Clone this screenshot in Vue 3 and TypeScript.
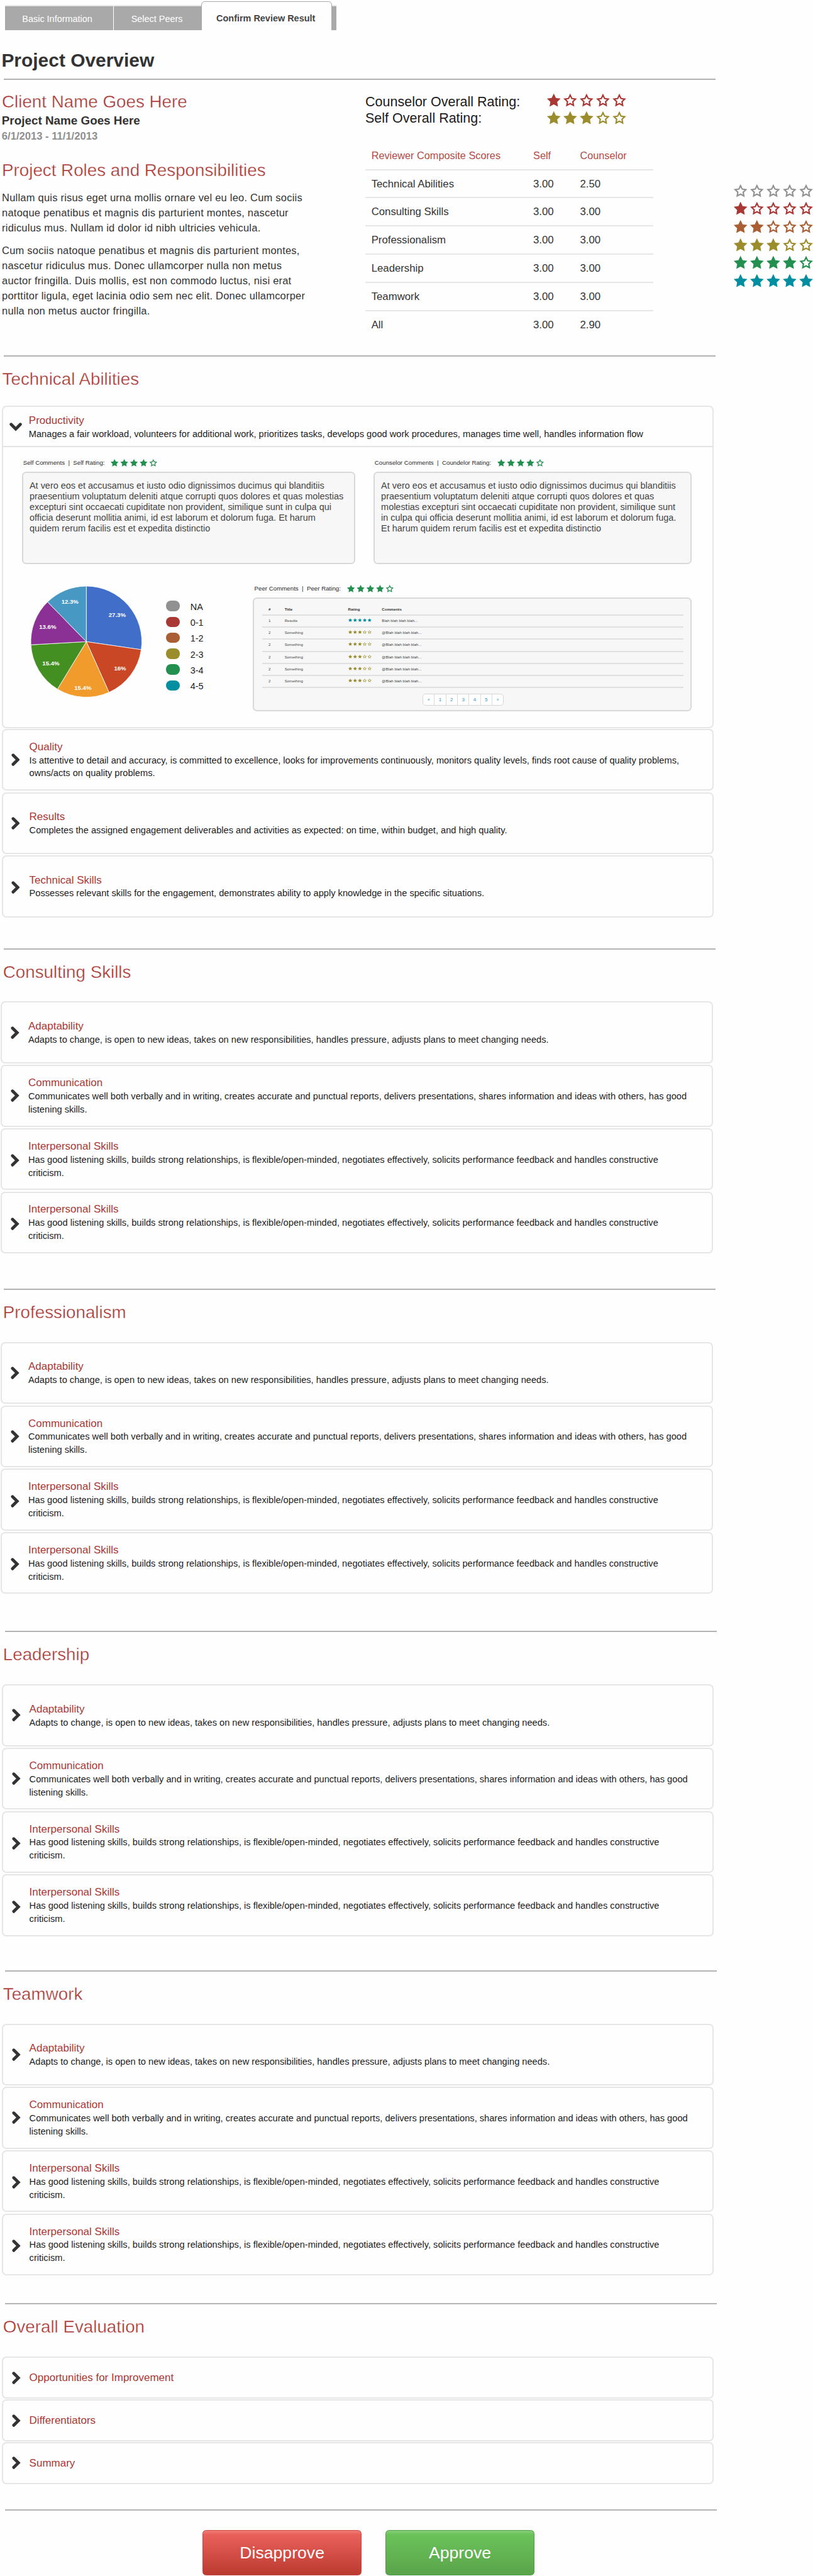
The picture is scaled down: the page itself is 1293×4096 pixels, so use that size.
<script setup lang="ts">
import { defineComponent, h } from 'vue'

/** Five-point star path centred at (cx, cy). */
function starPath(cx: number, cy: number, outer: number, inner: number): string {
  const pts: string[] = []
  for (let i = 0; i < 10; i++) {
    const r = i % 2 === 0 ? outer : inner
    const a = (Math.PI / 5) * i - Math.PI / 2
    pts.push(`${(cx + r * Math.cos(a)).toFixed(2)} ${(cy + r * Math.sin(a)).toFixed(2)}`)
  }
  return `M${pts.join('L')}Z`
}

const STAR_FULL = starPath(14, 14, 14.2, 7.1)
const STAR_EMPTY = STAR_FULL + starPath(14, 14, 8.1, 4.05)

const StarRating = defineComponent({
  props: {
    value: { type: Number, required: true },
    tone: { type: String, required: true },
    pitch: { type: Number, default: 32.5 },
    size: { type: Number, default: 26.7 },
  },
  setup(props) {
    return () => {
      const k = props.size / 26.7
      const width = props.pitch * 4 + props.size
      const height = 25.4 * k
      return h(
        'svg',
        {
          class: ['stars', props.tone],
          viewBox: `0 0 ${width} ${height}`,
          style: { width: `${width / 10}rem`, height: `${height / 10}rem` },
        },
        [0, 1, 2, 3, 4].map((i) =>
          h('path', {
            d: i < props.value ? STAR_FULL : STAR_EMPTY,
            'fill-rule': 'evenodd',
            fill: 'currentColor',
            transform: `translate(${i * props.pitch - 0.65 * k} 0) scale(${k})`,
          }),
        ),
      )
    }
  },
})

interface Item {
  title: string
  text?: string
  low?: boolean
}
interface Section {
  title: string
  height: number
  shift: boolean
  compact?: boolean
  items: Item[]
}

const scores = [
  ['Technical Abilities', '3.00', '2.50'],
  ['Consulting Skills', '3.00', '3.00'],
  ['Professionalism', '3.00', '3.00'],
  ['Leadership', '3.00', '3.00'],
  ['Teamwork', '3.00', '3.00'],
  ['All', '3.00', '2.90'],
]

const scale = [
  { value: 0, tone: 'gray' },
  { value: 1, tone: 'red' },
  { value: 2, tone: 'rust' },
  { value: 3, tone: 'olive' },
  { value: 4, tone: 'green' },
  { value: 5, tone: 'teal' },
]

const legend = [
  { label: 'NA', tone: 'gray' },
  { label: '0-1', tone: 'red' },
  { label: '1-2', tone: 'rust' },
  { label: '2-3', tone: 'olive' },
  { label: '3-4', tone: 'green' },
  { label: '4-5', tone: 'teal' },
]

const slices = [
  { pct: 27.3, label: '27.3%', color: '#416ec9', x: 171.2, y: 56.3 },
  { pct: 16, label: '16%', color: '#ca4725', x: 177, y: 162 },
  { pct: 15.4, label: '15.4%', color: '#f09b2b', x: 103.3, y: 200.6 },
  { pct: 15.4, label: '15.4%', color: '#448f22', x: 39.8, y: 152.6 },
  { pct: 13.6, label: '13.6%', color: '#8b3094', x: 33.5, y: 80.6 },
  { pct: 12.3, label: '12.3%', color: '#4798c3', x: 77.6, y: 30.3 },
]
let turn = 0
const wedges = slices.map((s) => {
  const a0 = turn * Math.PI * 2
  turn += s.pct / 100
  const a1 = turn * Math.PI * 2
  const p = (a: number) => `${(110 + 110 * Math.sin(a)).toFixed(2)} ${(110 - 110 * Math.cos(a)).toFixed(2)}`
  return { ...s, d: `M110 110L${p(a0)}A110 110 0 0 1 ${p(a1)}Z` }
})

const technical: Item[] = [
  {
    title: 'Quality',
    text: 'Is attentive to detail and accuracy, is committed to excellence, looks for improvements continuously, monitors quality levels, finds root cause of quality problems,\nowns/acts on quality problems.',
  },
  {
    title: 'Results',
    text: 'Completes the assigned engagement deliverables and activities as expected: on time, within budget, and high quality.',
  },
  {
    title: 'Technical Skills',
    text: 'Possesses relevant skills for the engagement, demonstrates ability to apply knowledge in the specific situations.',
    low: true,
  },
]

const interpersonal: Item = {
  title: 'Interpersonal Skills',
  text: 'Has good listening skills, builds strong relationships, is flexible/open-minded, negotiates effectively, solicits performance feedback and handles constructive\ncriticism.',
  low: true,
}
const common: Item[] = [
  {
    title: 'Adaptability',
    text: 'Adapts to change, is open to new ideas, takes on new responsibilities, handles pressure, adjusts plans to meet changing needs.',
  },
  {
    title: 'Communication',
    text: 'Communicates well both verbally and in writing, creates accurate and punctual reports, delivers presentations, shares information and ideas with others, has good\nlistening skills.',
  },
  interpersonal,
  interpersonal,
]

const sections: Section[] = [
  { title: 'Consulting Skills', height: 674.7, shift: false, items: common },
  { title: 'Professionalism', height: 678.3, shift: false, items: common },
  { title: 'Leadership', height: 672, shift: true, items: common },
  { title: 'Teamwork', height: 660, shift: true, items: common },
  {
    title: 'Overall Evaluation',
    height: 408,
    shift: true,
    compact: true,
    items: [{ title: 'Opportunities for Improvement' }, { title: 'Differentiators' }, { title: 'Summary' }],
  },
]

const peers = [
  { n: '1', title: 'Results', value: 5, tone: 'teal', comment: 'Blah blah blah blah...' },
  ...Array.from({ length: 5 }, () => ({
    n: '2',
    title: 'Something',
    value: 3,
    tone: 'olive',
    comment: '@Blah blah blah blah...',
  })),
]
const pages = ['«', '1', '2', '3', '4', '5', '»']

const selfComment =
  'At vero eos et accusamus et iusto odio dignissimos ducimus qui blanditiis\npraesentium voluptatum deleniti atque corrupti quos dolores et quas molestias\nexcepturi sint occaecati cupiditate non provident, similique sunt in culpa qui\nofficia deserunt mollitia animi, id est laborum et dolorum fuga. Et harum\nquidem rerum facilis est et expedita distinctio'
const counselorComment =
  'At vero eos et accusamus et iusto odio dignissimos ducimus qui blanditiis\npraesentium voluptatum deleniti atque corrupti quos dolores et quas\nmolestias excepturi sint occaecati cupiditate non provident, similique sunt\nin culpa qui officia deserunt mollitia animi, id est laborum et dolorum fuga.\nEt harum quidem rerum facilis est et expedita distinctio'
const intro =
  'Nullam quis risus eget urna mollis ornare vel eu leo. Cum sociis\nnatoque penatibus et magnis dis parturient montes, nascetur\nridiculus mus. Nullam id dolor id nibh ultricies vehicula.'
const detail =
  'Cum sociis natoque penatibus et magnis dis parturient montes,\nnascetur ridiculus mus. Donec ullamcorper nulla non metus\nauctor fringilla. Duis mollis, est non commodo luctus, nisi erat\nporttitor ligula, eget lacinia odio sem nec elit. Donec ullamcorper\nnulla non metus auctor fringilla.'
</script>

<template>
  <main class="page">
    <nav class="tabs">
      <a class="tab first">Basic Information</a>
      <a class="tab second">Select Peers</a>
      <a class="tab active">Confirm Review Result</a>
      <span class="tab tail"></span>
    </nav>

    <h1>Project Overview</h1>
    <div class="rule top-rule"></div>

    <div class="overview">
      <div class="project">
        <h2 class="heading">Client Name Goes Here</h2>
        <p class="project-name">Project Name Goes Here</p>
        <p class="dates">6/1/2013 - 11/1/2013</p>
        <h2 class="heading roles">Project Roles and Responsibilities</h2>
        <p class="copy">{{ intro }}</p>
        <p class="copy second-copy">{{ detail }}</p>
      </div>

      <div class="ratings">
        <div class="overall">
          <span>Counselor Overall Rating:</span>
          <StarRating :value="1" tone="red" />
        </div>
        <div class="overall lower">
          <span>Self Overall Rating:</span>
          <StarRating :value="3" tone="olive" />
        </div>
        <div class="scores">
          <div class="score head"><span>Reviewer Composite Scores</span><span>Self</span><span>Counselor</span></div>
          <div v-for="row in scores" :key="row[0]" class="score">
            <span v-for="(cell, i) in row" :key="i">{{ cell }}</span>
          </div>
        </div>
      </div>

      <div class="scale">
        <StarRating v-for="s in scale" :key="s.tone" :value="s.value" :tone="s.tone" />
      </div>
    </div>

    <section class="section technical">
      <div class="rule"></div>
      <h2 class="heading">Technical Abilities</h2>
      <article class="open">
        <header class="open-head">
          <svg class="chevron-down" viewBox="0 0 25 17"><path d="M3.4 3.4L12.5 12.6L21.6 3.4" /></svg>
          <div class="text">
            <h3>Productivity</h3>
            <p>Manages a fair workload, volunteers for additional work, prioritizes tasks, develops good work procedures, manages time well, handles information flow</p>
          </div>
        </header>
        <div class="comments">
          <div class="comment self">
            <div class="label">Self Comments&nbsp; |&nbsp; Self Rating:<StarRating :value="4" tone="green" :pitch="19.2" :size="15.4" /></div>
            <p class="well">{{ selfComment }}</p>
          </div>
          <div class="comment counselor">
            <div class="label">Counselor Comments&nbsp; |&nbsp; Coundelor Rating:<StarRating :value="4" tone="green" :pitch="19.2" :size="15.4" /></div>
            <p class="well">{{ counselorComment }}</p>
          </div>
        </div>
        <div class="results">
          <svg class="pie" viewBox="0 0 220 220">
            <path v-for="(w, i) in wedges" :key="i" :d="w.d" :fill="w.color" stroke="#fff" stroke-width="1" />
            <text v-for="(w, i) in wedges" :key="'t' + i" :x="w.x" :y="w.y + 4.4">{{ w.label }}</text>
          </svg>
          <ul class="legend">
            <li v-for="l in legend" :key="l.label"><i :class="l.tone"></i><span>{{ l.label }}</span></li>
          </ul>
          <div class="peer">
            <div class="label">Peer Comments&nbsp; |&nbsp; Peer Rating:<StarRating :value="4" tone="green" :pitch="19.2" :size="15.4" /></div>
            <div class="well peer-well">
              <div class="peer-row peer-head"><span>#</span><span>Title</span><span>Rating</span><span>Comments</span></div>
              <div v-for="(p, i) in peers" :key="i" class="peer-row">
                <span>{{ p.n }}</span><span>{{ p.title }}</span>
                <span><StarRating :value="p.value" :tone="p.tone" :pitch="9.57" :size="7.6" /></span>
                <span>{{ p.comment }}</span>
              </div>
              <div class="pager"><a v-for="p in pages" :key="p">{{ p }}</a></div>
            </div>
          </div>
        </div>
      </article>
      <article v-for="item in technical" :key="item.title" class="card">
        <svg class="chevron" :class="{ low: item.low }" viewBox="0 0 17 25"><path d="M3.6 3.4L12.8 12.5L3.6 21.6" /></svg>
        <div class="text">
          <h3>{{ item.title }}</h3>
          <p>{{ item.text }}</p>
        </div>
      </article>
    </section>

    <section
      v-for="s in sections"
      :key="s.title"
      class="section"
      :class="{ shift: s.shift, compact: s.compact }"
      :style="{ height: s.height / 10 + 'rem' }"
    >
      <div class="rule"></div>
      <h2 class="heading">{{ s.title }}</h2>
      <article v-for="(item, i) in s.items" :key="i" class="card">
        <svg class="chevron" :class="{ low: item.low }" viewBox="0 0 17 25"><path d="M3.6 3.4L12.8 12.5L3.6 21.6" /></svg>
        <div class="text">
          <h3>{{ item.title }}</h3>
          <p v-if="item.text">{{ item.text }}</p>
        </div>
      </article>
    </section>

    <div class="rule last"></div>
    <div class="actions">
      <button class="disapprove">Disapprove</button>
      <button class="approve">Approve</button>
    </div>
  </main>
</template>

<style>
/* 1rem stands for ten design pixels */
html {
  font-size: 8.0255px;
  background: #fff;
}
</style>

<style scoped>
.page {
  width: 161.1rem;
  height: 510.3rem;
  overflow: hidden;
  background: #fefefe;
  color: #1c1c1c;
  font-family: 'Liberation Sans', Arial, Helvetica, sans-serif;
  white-space: nowrap;
}
h1, h2, h3, p, ul { margin: 0; padding: 0; font-weight: 400; }
.gray { color: #919191; }
.red { color: #a93733; }
.rust { color: #a95f33; }
.olive { color: #9b8c2c; }
.green { color: #239050; }
.teal { color: #028ea1; }
.page :deep(.stars) { display: block; flex: none; overflow: visible; }
.page :deep(.stars.gray) { color: #919191; }
.page :deep(.stars.red) { color: #a93733; }
.page :deep(.stars.rust) { color: #a95f33; }
.page :deep(.stars.olive) { color: #9b8c2c; }
.page :deep(.stars.green) { color: #239050; }
.page :deep(.stars.teal) { color: #028ea1; }

/* tabs */
.tabs {
  display: flex;
  align-items: flex-end;
  box-sizing: border-box;
  width: 66.7rem;
  height: 6rem;
  margin-left: 1rem;
  padding-right: 1rem;
}
.tab {
  box-sizing: border-box;
  height: 5rem;
  border-top: 2px solid #e6e6e6;
  background: #a9a9a9;
  color: #fff;
  font-size: 1.8rem;
  line-height: 5.1rem;
  flex: none;
}
.first { width: 21.5rem; padding-left: 3.4rem; border-right: 1px solid #fff; }
.second { width: 17.4rem; padding-left: 3.5rem; }
.active {
  width: 25.9rem;
  height: 5.8rem;
  border: 1px solid #aaa;
  border-bottom: 0;
  border-radius: 0.7rem 0.7rem 0 0;
  background: #fefefe;
  color: #444;
  font-weight: 700;
  line-height: 6.5rem;
  padding-left: 2.85rem;
}
.tail { width: 0.9rem; }

h1 {
  margin: 4.01rem 0 0 0.3rem;
  color: #333;
  font-size: 3.73rem;
  font-weight: 700;
  line-height: 4rem;
}
.rule { width: 141rem; height: 2px; margin-left: 0.8rem; background: #b3b3b3; }
.top-rule { margin-top: 1.54rem; }
.shift .rule, .last { margin-left: 1rem; }

.heading {
  margin-left: 0.38rem;
  color: #a93733;
  font-size: 3.46rem;
  line-height: 4rem;
  -webkit-text-stroke: 0.35px #fefefe;
}

/* overview */
.overview { display: flex; height: 54.65rem; }
.project { width: 72.4rem; flex: none; color: #333; }
.project .heading { margin-top: 2.4rem; }
.project-name { margin: 0.19rem 0 0 0.35rem; font-size: 2.35rem; font-weight: 700; line-height: 3rem; }
.dates { margin: 0.35rem 0 0 0.35rem; color: #8f8f8f; font-size: 2.07rem; font-weight: 700; line-height: 2.4rem; }
.project .roles { margin-top: 3.59rem; }
.copy { margin: 1.99rem 0 0 0.38rem; font-size: 2.06rem; letter-spacing: 0.026rem; line-height: 3rem; white-space: pre; }
.second-copy { margin-top: 1.53rem; }

.ratings { width: 57.1rem; flex: none; padding-top: 2.78rem; }
.overall { display: flex; height: 3.27rem; line-height: 3.27rem; font-size: 2.68rem; }
.overall span { width: 36.06rem; }
.lower :deep(.stars) { margin-top: 0.2rem; }
.scores { margin-top: 3.2rem; color: #333; font-size: 2.09rem; }
.score {
  display: grid;
  grid-template-columns: 33.27rem 9.27rem 1fr;
  box-sizing: border-box;
  height: 5.59rem;
  line-height: 5.39rem;
  border-bottom: 2px solid #e7e7e7;
}
.score span:first-child { padding-left: 1.2rem; }
.score:last-child { border: 0; }
.head { height: 5.4rem; line-height: 5.2rem; color: #b24a46; font-size: 2.03rem; }

.scale { display: flex; flex-direction: column; gap: 1.03rem; margin-left: 15.9rem; padding-top: 20.68rem; }

/* sections */
.section.technical { height: 117.4rem; }
.section .heading { margin-top: 2.5rem; margin-bottom: 3.83rem; margin-left: 0.6rem; }
.technical .heading { margin-top: 2.47rem; margin-bottom: 3.23rem; margin-left: 0.45rem; }

.card {
  display: flex;
  align-items: center;
  box-sizing: border-box;
  width: 141.1rem;
  height: 12.27rem;
  margin: 0 0 0.28rem 0.16rem;
  border: 2px solid #e6e6e6;
  border-radius: 0.9rem;
}
.technical .card, .shift .card { margin-left: 0.36rem; }
.chevron { width: 1.7rem; height: 2.5rem; flex: none; margin-left: 1.75rem; margin-right: 1.75rem; }
.shift .chevron { margin-left: 1.8rem; margin-right: 1.7rem; }
.technical .chevron { margin-left: 1.6rem; margin-right: 1.9rem; }
.chevron path, .chevron-down path { fill: none; stroke: #333; stroke-width: 6; stroke-linecap: round; stroke-linejoin: miter; }
.chevron.low { margin-top: 0.5rem; }
.text { padding-top: 0.25rem; color: #1c1c1c; }
.text h3 { color: #a93733; font-size: 2.12rem; line-height: 2.6rem; }
.text p { font-size: 1.823rem; line-height: 2.6rem; white-space: pre; }
.compact .card { height: 8.33rem; margin-bottom: 0.13rem; }

/* expanded card */
.open {
  box-sizing: border-box;
  width: 141.1rem;
  height: 63.9rem;
  margin: 0 0 0.1rem 0.36rem;
  border: 2px solid #e6e6e6;
  border-radius: 0.9rem;
}
.open-head {
  display: flex;
  box-sizing: border-box;
  height: 8rem;
  padding-top: 1.3rem;
  border-bottom: 2px solid #e3e3e3;
}
.chevron-down { width: 2.5rem; height: 1.7rem; flex: none; margin: 1.8rem 1.4rem 0 1.2rem; }
.open .text { padding-top: 0.15rem; }
.comments { display: flex; gap: 3.6rem; padding: 2.35rem 0 0 3.7rem; }
.self { width: 66.07rem; }
.counselor { width: 63.1rem; }
.label { display: flex; margin: 0 0 0.9rem 0.27rem; color: #2a2a2a; font-size: 1.21rem; line-height: 1.6rem; }
.label :deep(.stars) { margin-left: 1.2rem; }
.well {
  box-sizing: border-box;
  height: 18.27rem;
  padding: 1.5rem 1.3rem;
  border: 2px solid #d9d9d9;
  border-radius: 0.8rem;
  background: #f7f7f7;
  color: #444;
  font-size: 1.8rem;
  line-height: 2.1rem;
  white-space: pre;
}
.results { display: flex; margin-top: 4.15rem; padding-left: 5.54rem; }
.pie { width: 22rem; height: 22rem; flex: none; margin-top: 0.25rem; }
.pie text { fill: #fff; font-size: 12px; font-weight: 700; text-anchor: middle; }
.legend { width: 17.3rem; margin: 3.12rem 0 0 4.7rem; list-style: none; font-size: 1.8rem; }
.legend li { display: flex; height: 3.15rem; }
.legend i { width: 2.73rem; height: 2.08rem; border-radius: 1rem; background: currentColor; }
.legend span { padding: 0.2rem 0 0 2.15rem; line-height: 2.08rem; }
.peer { width: 86.97rem; }
.peer-well { height: 22.53rem; padding: 1.11rem 1.45rem 0 1.55rem; font-size: 0.76rem; }
.peer-row {
  display: grid;
  grid-template-columns: 4.47rem 12.57rem 6.7rem 1fr;
  box-sizing: border-box;
  height: 2.4rem;
  line-height: 2.05rem;
  border-bottom: 2px solid #e0e0e0;
}
.peer-row span:first-child { padding-left: 1.25rem; }
.peer-head { height: 2.2rem; font-weight: 700; color: #333; }
.peer-row :deep(.stars) { margin-top: 0.5rem; }
.pager {
  display: flex;
  box-sizing: border-box;
  width: 16.1rem;
  height: 2.34rem;
  margin: 1.1rem 0 0 31.8rem;
  border: 1px solid #d6d6d6;
  border-radius: 0.6rem;
  background: #fff;
  color: #2d97d3;
  font-size: 1rem;
  line-height: 2.2rem;
  text-align: center;
}
.pager a { flex: 1; }
.pager a + a { border-left: 1px solid #d9d9d9; }
.pager a:first-child, .pager a:last-child { font-size: 0.8rem; }

/* actions */
.actions { display: flex; gap: 4.7rem; margin: 3.9rem 0 0 40.1rem; }
.actions button {
  box-sizing: border-box;
  height: 9rem;
  padding: 0.2rem 0 0;
  border: 1px solid;
  border-radius: 0.7rem;
  color: #fff;
  font-family: inherit;
  font-size: 3.32rem;
}
.disapprove {
  width: 31.6rem;
  border-color: #c9453e !important;
  background: linear-gradient(#f07b75, #e9605a 9%, #bb3a30);
}
.approve {
  width: 29.5rem;
  border-color: #519a48 !important;
  background: linear-gradient(#86d078, #6ac25a 9%, #5aa44a);
}
</style>
